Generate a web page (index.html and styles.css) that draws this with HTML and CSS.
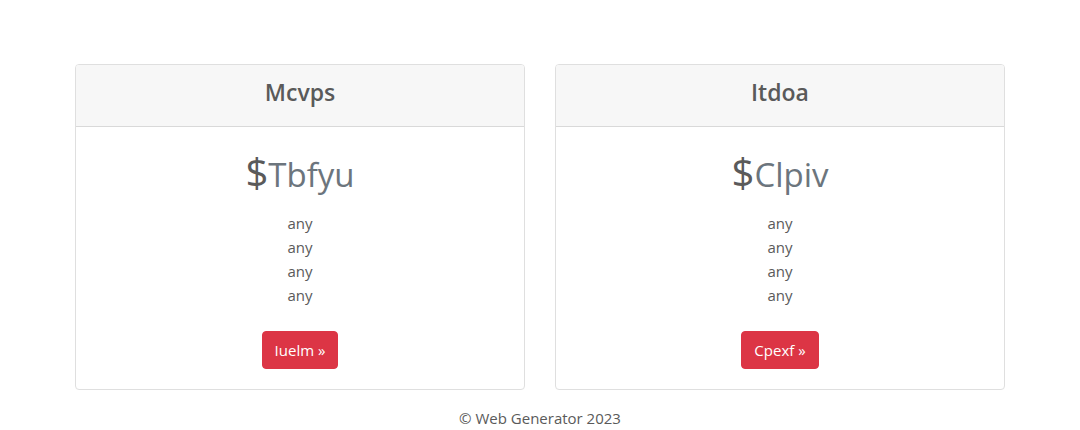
FILE: index.html
```html
<!DOCTYPE html>
<html lang="en">
<head>
<meta charset="utf-8">
<title>Pricing</title>
<link rel="stylesheet" href="styles.css">
</head>
<body>
<main class="container">
  <div class="card-deck">
    <section class="card">
      <header class="card-header"><h2 class="card-name">Mcvps</h2></header>
      <div class="card-body">
        <h1 class="price">$<small class="amount">Tbfyu</small></h1>
        <ul class="features"><li>any</li><li>any</li><li>any</li><li>any</li></ul>
        <a class="btn" href="#">Iuelm »</a>
      </div>
    </section>
    <section class="card">
      <header class="card-header"><h2 class="card-name">Itdoa</h2></header>
      <div class="card-body">
        <h1 class="price">$<small class="amount">Clpiv</small></h1>
        <ul class="features"><li>any</li><li>any</li><li>any</li><li>any</li></ul>
        <a class="btn" href="#">Cpexf »</a>
      </div>
    </section>
  </div>
</main>
<footer class="footer">© Web Generator 2023</footer>
</body>
</html>
```
FILE: styles.css
```css
* { box-sizing: border-box; }
body {
  margin: 0;
  padding-top: 64px;
  font-family: "Open Sans", "Noto Sans", sans-serif;
  font-size: 15px;
  font-weight: 400;
  line-height: 24px;
  color: #5a5a5a;
  text-align: center;
  background: #fff;
}
.container { max-width: 960px; margin: 0 auto; padding: 0 15px; }
.card-deck { display: grid; grid-template-columns: 1fr 1fr; gap: 30px; }
.card { border: 1px solid #dfdfdf; border-radius: 4px; overflow: hidden; }
.card-header { padding: 12px 20px 19px; background: #f7f7f7; border-bottom: 1px solid #d9d9d9; }
.card-name { margin: 0; font-size: 23px; font-weight: 600; line-height: 30px; }
.card-body { padding: 20px; }
.price { margin: 0 0 11px; font-size: 40px; font-weight: 500; line-height: 50px; }
.amount { font-size: 33px; font-weight: 400; color: #6c757d; }
.features { margin: 0 0 24px; padding: 0; list-style: none; }
.btn {
  display: inline-block;
  vertical-align: top;
  padding: 6px 12px;
  border: 1px solid #dc3545;
  border-radius: 4px;
  background: #dc3545;
  color: #fff;
  font-weight: 400;
  text-decoration: none;
}
.footer { margin-top: 16px; }
```
